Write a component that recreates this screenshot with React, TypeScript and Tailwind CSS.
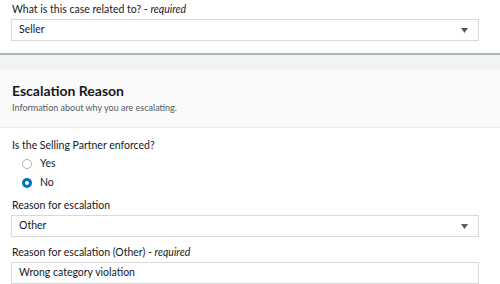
import React from "react"

const font = { fontFamily: 'Lato, "Open Sans", sans-serif' }

function Arrow() {
  return (
    <svg width="7" height="5" viewBox="0 0 7 5" className="shrink-0">
      <path d="M0 0 H7 L3.5 5 Z" fill="#545b64" />
    </svg>
  )
}

function SelectBox({ value }: { value: string }) {
  return (
    <div className="flex h-[22px] w-[468px] items-center justify-between border border-[#d5dbdb] bg-white pl-[7px] pr-[10px] text-[10.5px] text-[#16191f]">
      <span>{value}</span>
      <Arrow />
    </div>
  )
}

function Radio({ checked, label }: { checked: boolean; label: string }) {
  return (
    <div className="flex h-[18px] items-center gap-[8px] pl-[11px] text-[10.5px] text-[#16191f]">
      {checked ? (
        <span className="flex h-[10px] w-[10px] items-center justify-center rounded-full bg-[#0073bb]">
          <span className="h-[4px] w-[4px] rounded-full bg-white" />
        </span>
      ) : (
        <span className="h-[10px] w-[10px] rounded-full border border-[#aab7b8] bg-white" />
      )}
      <span>{label}</span>
    </div>
  )
}

export default function App() {
  return (
    <div className="h-[284px] w-[500px] overflow-hidden bg-white" style={font}>
      <div className="px-[11px] pt-[1px]">
        <div className="h-[18px] pl-[1px] text-[10.5px] leading-[16px] text-[#16191f]">
          What is this case related to? - <i>required</i>
        </div>
        <SelectBox value="Seller" />
      </div>
      <div className="mt-[12px] h-[2px] bg-[#aab7b8]" />
      <div className="h-[15px] bg-[#f2f3f3]" />
      <div className="h-[58px] border-b border-[#eaeded] bg-[#fafafa] px-[12px] pt-[11px]">
        <div className="text-[14px] font-bold leading-[20px] text-[#16191f]">Escalation Reason</div>
        <div className="text-[9px] leading-[14px] text-[#545b64]">
          Information about why you are escalating.
        </div>
      </div>
      <div className="px-[11px] pt-[9px]">
        <div className="pl-[1px] text-[10.5px] leading-[16px] text-[#16191f]">Is the Selling Partner enforced?</div>
        <div className="mt-[2px] flex flex-col gap-[1px]">
          <Radio checked={false} label="Yes" />
          <Radio checked label="No" />
        </div>
        <div className="mt-[5px] h-[18px] pl-[1px] text-[10.5px] leading-[16px] text-[#16191f]">Reason for escalation</div>
        <SelectBox value="Other" />
        <div className="mt-[7px] h-[18px] pl-[1px] text-[10.5px] leading-[16px] text-[#16191f]">
          Reason for escalation (Other) - <i>required</i>
        </div>
        <div className="flex h-[22px] w-[468px] items-center border border-[#d5dbdb] bg-white pl-[7px] text-[10.5px] text-[#16191f]">
          Wrong category violation
        </div>
      </div>
    </div>
  )
}
